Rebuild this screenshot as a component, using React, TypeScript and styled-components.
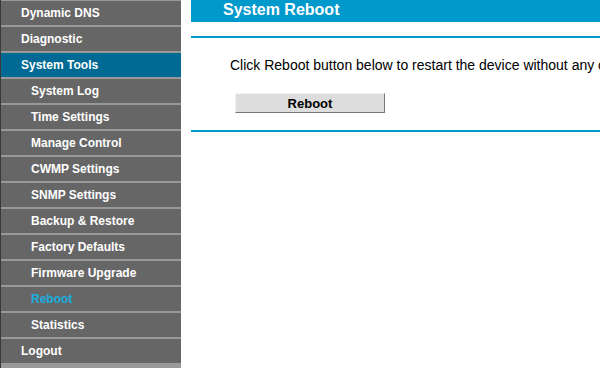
import React from "react";
import styled, { createGlobalStyle } from "styled-components";

const Global = createGlobalStyle`
  html, body { margin: 0; padding: 0; background: #fff; overflow: hidden; }
  body { font-family: "Liberation Sans", Arial, sans-serif; }
`;

const Page = styled.div`
  display: flex;
  width: 600px;
  height: 368px;
  overflow: hidden;
`;

const Sidebar = styled.nav`
  flex: 0 0 180px;
  width: 180px;
  display: flex;
  flex-direction: column;
  background: #999999;
  border-left: 1px solid #3a3a3a;
  padding-top: 1px;
`;

const MenuItem = styled.div<{ $sub?: boolean; $selected?: boolean; $current?: boolean }>`
  height: 24px;
  line-height: 24px;
  flex: 0 0 24px;
  margin-bottom: 2px;
  padding-left: ${(p) => (p.$sub ? "30px" : "20px")};
  background: ${(p) => (p.$selected ? "#006a94" : "#666666")};
  color: ${(p) => (p.$current ? "#19aee0" : "#ffffff")};
  font-size: 12px;
  font-weight: bold;
  white-space: nowrap;
`;

const Main = styled.main`
  flex: 1;
  min-width: 0;
  padding-left: 10px;
  display: flex;
  flex-direction: column;
`;

const Title = styled.h1`
  margin: 0 0 14px;
  height: 22px;
  line-height: 19px;
  background: #0099cc;
  color: #fff;
  font-size: 16px;
  font-weight: bold;
  padding-left: 32px;
  white-space: nowrap;
`;

const Rule = styled.div`
  height: 2px;
  flex: 0 0 2px;
  background: #0099cc;
`;

const Body = styled.section`
  padding: 18px 0 0 39px;
  height: 74px;
`;

const Text = styled.p`
  margin: 0;
  font-size: 14px;
  line-height: 18px;
  color: #000;
  white-space: nowrap;
`;

const Button = styled.button`
  display: block;
  margin: 19px 0 0 5px;
  width: 150px;
  height: 20px;
  padding: 0;
  background: #dddddd;
  border-style: solid;
  border-width: 1px;
  border-color: #f4f4f4 #777777 #777777 #f0f0f0;
  font-family: "Liberation Sans", Arial, sans-serif;
  font-size: 13px;
  font-weight: bold;
  color: #000;
`;

const items: { label: string; sub?: boolean; selected?: boolean; current?: boolean }[] = [
  { label: "Dynamic DNS" },
  { label: "Diagnostic" },
  { label: "System Tools", selected: true },
  { label: "System Log", sub: true },
  { label: "Time Settings", sub: true },
  { label: "Manage Control", sub: true },
  { label: "CWMP Settings", sub: true },
  { label: "SNMP Settings", sub: true },
  { label: "Backup & Restore", sub: true },
  { label: "Factory Defaults", sub: true },
  { label: "Firmware Upgrade", sub: true },
  { label: "Reboot", sub: true, current: true },
  { label: "Statistics", sub: true },
  { label: "Logout" },
];

export default function App() {
  return (
    <>
      <Global />
      <Page>
        <Sidebar>
          {items.map((it) => (
            <MenuItem key={it.label} $sub={it.sub} $selected={it.selected} $current={it.current}>
              {it.label}
            </MenuItem>
          ))}
        </Sidebar>
        <Main>
          <Title>System Reboot</Title>
          <Rule />
          <Body>
            <Text>Click Reboot button below to restart the device without any changes.</Text>
            <Button>Reboot</Button>
          </Body>
          <Rule />
        </Main>
      </Page>
    </>
  );
}
